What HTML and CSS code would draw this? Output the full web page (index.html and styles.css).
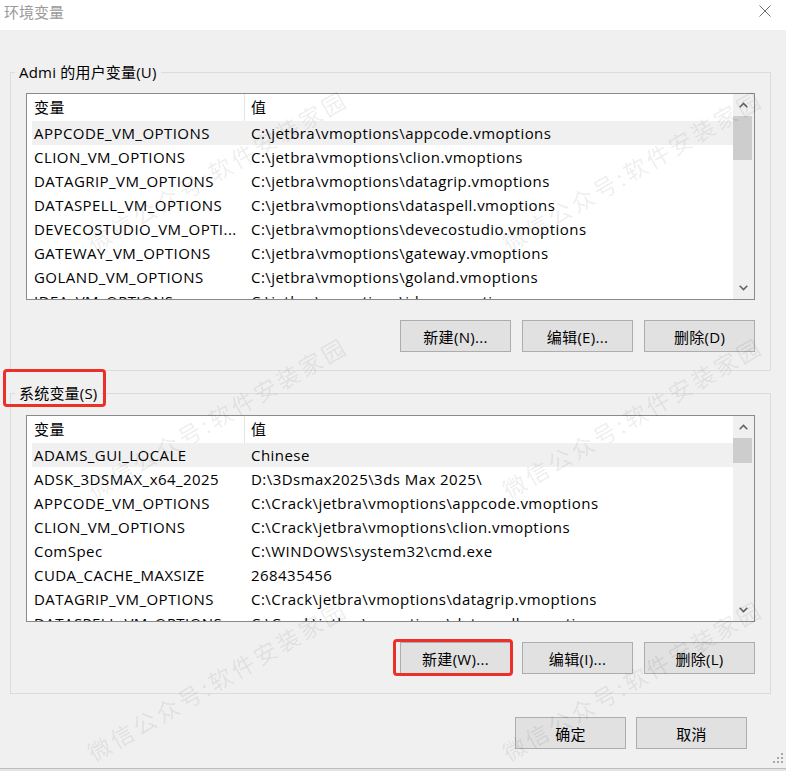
FILE: index.html
```html
<!DOCTYPE html>
<html lang="zh-CN">
<head>
<meta charset="utf-8">
<title>环境变量</title>
<link rel="stylesheet" href="styles.css">
</head>
<body>
<div class="titlebar">
  <div class="title">环境变量</div>
  <svg class="close" viewBox="0 0 12 12" width="12" height="12"><path d="M0.5 0.5 L11.5 11.5 M11.5 0.5 L0.5 11.5" stroke="#6e6e6e" stroke-width="1" fill="none"/></svg>
</div>

<fieldset class="group group-user">
  <legend>Admi 的用户变量(U)</legend>
  <div class="group-body">
    <div class="list">
      <div class="list-main">
        <div class="row head"><div class="c1">变量</div><div class="c2">值</div></div>
        <div class="row sel"><div class="c1">APPCODE_VM_OPTIONS</div><div class="c2">C:\jetbra\vmoptions\appcode.vmoptions</div></div>
        <div class="row"><div class="c1">CLION_VM_OPTIONS</div><div class="c2">C:\jetbra\vmoptions\clion.vmoptions</div></div>
        <div class="row"><div class="c1">DATAGRIP_VM_OPTIONS</div><div class="c2">C:\jetbra\vmoptions\datagrip.vmoptions</div></div>
        <div class="row"><div class="c1">DATASPELL_VM_OPTIONS</div><div class="c2">C:\jetbra\vmoptions\dataspell.vmoptions</div></div>
        <div class="row"><div class="c1">DEVECOSTUDIO_VM_OPTI...</div><div class="c2">C:\jetbra\vmoptions\devecostudio.vmoptions</div></div>
        <div class="row"><div class="c1">GATEWAY_VM_OPTIONS</div><div class="c2">C:\jetbra\vmoptions\gateway.vmoptions</div></div>
        <div class="row"><div class="c1">GOLAND_VM_OPTIONS</div><div class="c2">C:\jetbra\vmoptions\goland.vmoptions</div></div>
        <div class="row"><div class="c1">IDEA_VM_OPTIONS</div><div class="c2">C:\jetbra\vmoptions\idea.vmoptions</div></div>
      </div>
      <div class="sb">
        <div class="sb-btn"><svg width="9" height="6" viewBox="0 0 9 6"><path d="M0.7 5.2 L4.5 1.4 L8.3 5.2" stroke="#606060" stroke-width="1.5" fill="none"/></svg></div>
        <div class="sb-thumb thumb-user"></div>
        <div class="sb-track"></div>
        <div class="sb-btn"><svg width="9" height="6" viewBox="0 0 9 6"><path d="M0.7 0.8 L4.5 4.6 L8.3 0.8" stroke="#606060" stroke-width="1.5" fill="none"/></svg></div>
      </div>
    </div>
    <div class="btns">
      <button class="btn">新建(N)...</button>
      <button class="btn">编辑(E)...</button>
      <button class="btn">删除(D)</button>
    </div>
  </div>
</fieldset>

<fieldset class="group group-sys">
  <legend class="marked">系统变量(S)<span class="mark mark-legend"></span></legend>
  <div class="group-body">
    <div class="list">
      <div class="list-main">
        <div class="row head"><div class="c1">变量</div><div class="c2">值</div></div>
        <div class="row sel"><div class="c1">ADAMS_GUI_LOCALE</div><div class="c2">Chinese</div></div>
        <div class="row"><div class="c1">ADSK_3DSMAX_x64_2025</div><div class="c2">D:\3Dsmax2025\3ds Max 2025\</div></div>
        <div class="row"><div class="c1">APPCODE_VM_OPTIONS</div><div class="c2">C:\Crack\jetbra\vmoptions\appcode.vmoptions</div></div>
        <div class="row"><div class="c1">CLION_VM_OPTIONS</div><div class="c2">C:\Crack\jetbra\vmoptions\clion.vmoptions</div></div>
        <div class="row"><div class="c1">ComSpec</div><div class="c2">C:\WINDOWS\system32\cmd.exe</div></div>
        <div class="row"><div class="c1">CUDA_CACHE_MAXSIZE</div><div class="c2">268435456</div></div>
        <div class="row"><div class="c1">DATAGRIP_VM_OPTIONS</div><div class="c2">C:\Crack\jetbra\vmoptions\datagrip.vmoptions</div></div>
        <div class="row"><div class="c1">DATASPELL_VM_OPTIONS</div><div class="c2">C:\Crack\jetbra\vmoptions\dataspell.vmoptions</div></div>
      </div>
      <div class="sb">
        <div class="sb-btn"><svg width="9" height="6" viewBox="0 0 9 6"><path d="M0.7 5.2 L4.5 1.4 L8.3 5.2" stroke="#606060" stroke-width="1.5" fill="none"/></svg></div>
        <div class="sb-thumb thumb-sys"></div>
        <div class="sb-track"></div>
        <div class="sb-btn"><svg width="9" height="6" viewBox="0 0 9 6"><path d="M0.7 0.8 L4.5 4.6 L8.3 0.8" stroke="#606060" stroke-width="1.5" fill="none"/></svg></div>
      </div>
    </div>
    <div class="btns">
      <button class="btn">新建(W)...<span class="mark mark-btn"></span></button>
      <button class="btn">编辑(I)...</button>
      <button class="btn">删除(L)</button>
    </div>
  </div>
</fieldset>

<div class="footer">
  <button class="btn">确定</button>
  <button class="btn">取消</button>
</div>

<div class="edge"></div>

<svg class="grip" width="12" height="12" viewBox="0 0 12 12">
  <g fill="#a8a8a8">
    <rect x="10" y="0" width="2" height="2"/>
    <rect x="6" y="4" width="2" height="2"/><rect x="10" y="4" width="2" height="2"/>
    <rect x="2" y="8" width="2" height="2"/><rect x="6" y="8" width="2" height="2"/><rect x="10" y="8" width="2" height="2"/>
  </g>
</svg>

<div class="watermarks">
  <span class="wm wm1">微信公众号:软件安装家园</span>
  <span class="wm wm2">微信公众号:软件安装家园</span>
  <span class="wm wm3">微信公众号:软件安装家园</span>
  <span class="wm wm4">微信公众号:软件安装家园</span>
  <span class="wm wm5">微信公众号:软件安装家园</span>
  <span class="wm wm6">微信公众号:软件安装家园</span>
</div>
</body>
</html>
```

FILE: styles.css
```css
* { box-sizing: border-box; }
html, body { margin: 0; padding: 0; }
body {
  width: 786px;
  height: 771px;
  overflow: hidden;
  background: #f0f0f0;
  font-family: "Open Sans", "Noto Sans CJK SC", sans-serif;
  font-size: 15px;
  color: #000;
  position: relative;
  display: flex;
  flex-direction: column;
}

.titlebar {
  height: 30px;
  flex-shrink: 0;
  background: #fff;
  display: flex;
  justify-content: space-between;
  align-items: flex-start;
}
.title {
  padding-left: 4px;
  line-height: 24px;
  color: #9a9a9a;
  font-family: "Noto Sans CJK SC", sans-serif;
  font-size: 15px;
}
.close { margin: 5px 15px 0 0; }

.group {
  border: 1px solid #dcdcdc;
  margin: 0 15px 0 10px;
  padding: 0;
  min-width: 0;
  flex-shrink: 0;
}
.group-user { margin-top: 32px; }
.group-sys { margin-top: 12px; }
.group legend {
  margin-left: 4px;
  padding: 0 4px;
  line-height: 20px;
  height: 20px;
  letter-spacing: 0.2px;
}
.marked { position: relative; }
.group-body { padding: 11px 15px 18px 15px; }
.group-sys .group-body { padding: 12px 15px 19px 15px; }

.list {
  height: 207px;
  border: 1px solid #8a8a8a;
  background: #fff;
  display: flex;
  overflow: hidden;
}
.list-main { flex: 1; min-width: 0; overflow: hidden; }
.row {
  display: grid;
  grid-template-columns: 212px 1fr;
  margin-left: 5px;
  height: 24px;
  align-items: center;
  white-space: nowrap;
  line-height: 24px;
  letter-spacing: 0.45px;
}
.row.head { height: 27px; line-height: 27px; }
.row.sel { background: #f0f0f0; }
.c1 { padding-left: 2px; overflow: hidden; }
.c2 { padding-left: 7px; overflow: hidden; }
.row.head .c2 {
  border-left: 1px solid #e5e5e5;
  padding-left: 6px;
  align-self: stretch;
}

.sb {
  width: 21px;
  flex-shrink: 0;
  background: #f0f0f0;
  display: flex;
  flex-direction: column;
}
.sb-btn {
  height: 22px;
  display: flex;
  align-items: center;
  justify-content: center;
}
.sb-thumb { background: #cdcdcd; margin-right: 2px; }
.thumb-user { height: 44px; }
.thumb-sys { height: 25px; }
.sb-track { flex: 1; }

.btns {
  display: flex;
  justify-content: flex-end;
  gap: 11px;
  margin-top: 20px;
}
.btn {
  width: 111px;
  height: 32px;
  padding: 0;
  background: #e1e1e1;
  border: 1px solid #adadad;
  font: inherit;
  letter-spacing: 0.3px;
  color: #000;
  display: flex;
  align-items: center;
  justify-content: center;
  position: relative;
}

.mark {
  position: absolute;
  border: 3px solid #ec2f28;
  border-radius: 4px;
  pointer-events: none;
}
.mark-legend { left: -12px; top: -14px; width: 103px; height: 38px; }
.mark-btn { left: -8px; top: -4px; width: 120px; height: 37px; }

.footer {
  display: flex;
  justify-content: flex-end;
  gap: 10px;
  margin: 23px 39px 0 0;
  flex-shrink: 0;
}

.edge {
  margin-top: auto;
  height: 3px;
  border-top: 1px solid #bdbdbd;
  background: #e4e4e4;
  flex-shrink: 0;
}

.grip { position: absolute; right: 3px; bottom: 6px; }

.watermarks {
  position: absolute;
  left: 0; top: 0; right: 0; bottom: 0;
  pointer-events: none;
  overflow: hidden;
}
.wm {
  position: absolute;
  white-space: nowrap;
  font-family: "Noto Sans CJK SC", sans-serif;
  font-size: 23px;
  letter-spacing: 3px;
  color: rgba(0, 0, 0, 0.085);
  transform: translate(-50%, -50%) rotate(-30deg);
}
.wm1 { left: 217px; top: 170px; }
.wm2 { left: 632px; top: 170px; }
.wm3 { left: 217px; top: 417px; }
.wm4 { left: 632px; top: 417px; }
.wm5 { left: 217px; top: 680px; }
.wm6 { left: 632px; top: 680px; }
```
